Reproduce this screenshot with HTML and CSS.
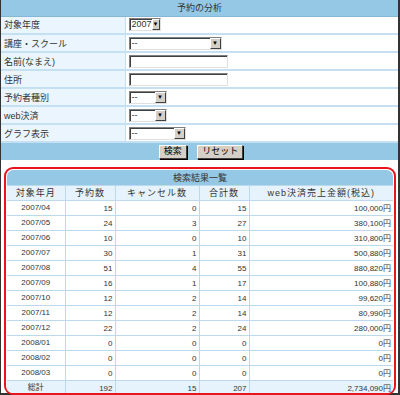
FILE: index.html
```html
<!DOCTYPE html>
<html lang="ja">
<head>
  <meta charset="UTF-8" />
  <title>予約の分析</title>
  <link rel="stylesheet" href="styles.css">
</head>
<body>
  <div class="frame">
    <table class="search-form">
      <tr><th colspan="2" class="title">予約の分析</th></tr>
      <tr>
        <td class="label">対象年度</td>
        <td><span class="sel w32"><span class="val">2007</span><span class="arrow">▼</span></span></td>
      </tr>
      <tr>
        <td class="label">講座・スクール</td>
        <td><span class="sel w93"><span class="val">--</span><span class="arrow">▼</span></span></td>
      </tr>
      <tr>
        <td class="label">名前(なまえ)</td>
        <td><span class="txt"></span></td>
      </tr>
      <tr>
        <td class="label">住所</td>
        <td><span class="txt"></span></td>
      </tr>
      <tr>
        <td class="label">予約者種別</td>
        <td><span class="sel w38"><span class="val">--</span><span class="arrow">▼</span></span></td>
      </tr>
      <tr>
        <td class="label">web決済</td>
        <td><span class="sel w38"><span class="val">--</span><span class="arrow">▼</span></span></td>
      </tr>
      <tr>
        <td class="label">グラフ表示</td>
        <td><span class="sel w57"><span class="val">--</span><span class="arrow">▼</span></span></td>
      </tr>
      <tr>
        <td colspan="2" class="buttons">
          <span class="btn">検索</span>
          <span class="btn">リセット</span>
        </td>
      </tr>
    </table>

    <div class="result-box">
      <table class="result">
        <tr><th colspan="5" class="title">検索結果一覧</th></tr>
        <tr class="head">
          <th class="c1">対象年月</th>
          <th class="c2">予約数</th>
          <th class="c3">キャンセル数</th>
          <th class="c4">合計数</th>
          <th class="c5">web決済売上金額(税込)</th>
        </tr>
        <tr><td class="month">2007/04</td><td>15</td><td>0</td><td>15</td><td>100,000円</td></tr>
        <tr><td class="month">2007/05</td><td>24</td><td>3</td><td>27</td><td>380,100円</td></tr>
        <tr><td class="month">2007/06</td><td>10</td><td>0</td><td>10</td><td>310,800円</td></tr>
        <tr><td class="month">2007/07</td><td>30</td><td>1</td><td>31</td><td>500,880円</td></tr>
        <tr><td class="month">2007/08</td><td>51</td><td>4</td><td>55</td><td>880,820円</td></tr>
        <tr><td class="month">2007/09</td><td>16</td><td>1</td><td>17</td><td>100,880円</td></tr>
        <tr><td class="month">2007/10</td><td>12</td><td>2</td><td>14</td><td>99,620円</td></tr>
        <tr><td class="month">2007/11</td><td>12</td><td>2</td><td>14</td><td>80,990円</td></tr>
        <tr><td class="month">2007/12</td><td>22</td><td>2</td><td>24</td><td>280,000円</td></tr>
        <tr><td class="month">2008/01</td><td>0</td><td>0</td><td>0</td><td>0円</td></tr>
        <tr><td class="month">2008/02</td><td>0</td><td>0</td><td>0</td><td>0円</td></tr>
        <tr><td class="month">2008/03</td><td>0</td><td>0</td><td>0</td><td>0円</td></tr>
        <tr class="total"><td class="month">総計</td><td>192</td><td>15</td><td>207</td><td>2,734,090円</td></tr>
      </table>
    </div>
  </div>
</body>
</html>
```

FILE: styles.css
```css
* {
  box-sizing: border-box;
}
body {
  margin: 0;
  background: #fff;
  font-family: "Liberation Sans", "Noto Sans CJK JP", sans-serif;
  font-size: 9px;
  color: #333;
}
.frame {
  width: 400px;
  height: 395px;
  border-left: 1px solid #333;
  border-right: 2px solid #333;
  border-bottom: 2px solid #333;
}
table {
  border-collapse: collapse;
  width: 100%;
}
.search-form .title {
  background: #95c8e5;
  border-bottom: 1px solid #86b8d6;
  height: 16px;
  font-weight: normal;
  padding: 0;
}
.search-form td {
  height: 18px;
  padding: 0 3px;
  border-bottom: 2px solid #c4e0f2;
  background: #fff;
}
.search-form td.label {
  width: 124px;
  background: #eaf5fd;
  border-right: 1px solid #c4e0f2;
}
.search-form td.buttons {
  background: #95c8e5;
  border-bottom: none;
  text-align: center;
  height: 18px;
  padding-left: 6px;
}
.sel {
  display: inline-flex;
  align-items: center;
  height: 13px;
  border: 1px solid;
  border-color: #808080 #e0e0e0 #e0e0e0 #808080;
  box-shadow: inset 1px 1px 0 #404040;
  background: #fff;
  vertical-align: middle;
}
.sel .val {
  flex: 1;
  padding-left: 2px;
  font-size: 9px;
  line-height: 11px;
}
.sel .arrow {
  width: 11px;
  height: 11px;
  background: #d4d0c8;
  border: 1px solid;
  border-color: #fff #404040 #404040 #fff;
  font-size: 6px;
  line-height: 9px;
  text-align: center;
  color: #000;
}
.w32 { width: 32px; }
.w38 { width: 38px; }
.w57 { width: 57px; }
.w93 { width: 93px; }
.txt {
  display: inline-block;
  width: 99px;
  height: 13px;
  border: 1px solid;
  border-color: #808080 #e0e0e0 #e0e0e0 #808080;
  box-shadow: inset 1px 1px 0 #404040;
  background: #fff;
  vertical-align: middle;
}
.btn {
  display: inline-block;
  height: 14px;
  padding: 0 4px;
  line-height: 11px;
  background: #d4d0c8;
  border: 1px solid;
  border-color: #fff #404040 #404040 #fff;
  box-shadow: 1px 1px 0 #000;
  color: #000;
  margin: 0 4px;
  vertical-align: middle;
}
.result-box {
  margin: 7px 2px 0 3px;
  height: 228px;
  border: 2px solid #e8141e;
  border-radius: 9px;
  padding: 1px 1px 0 1px;
  overflow: hidden;
}
.result {
  border-radius: 6px 6px 0 0;
  overflow: hidden;
}
.result .title {
  background: #95c8e5;
  height: 15px;
  font-weight: normal;
  padding: 0;
  border-radius: 6px 6px 0 0;
}
.result .head th {
  background: #e6f3fc;
  font-weight: normal;
  height: 15px;
  padding: 0;
  border: 1px solid #bcdaee;
  letter-spacing: 1px;
}
.result .head th:first-child { border-left: none; }
.result .head th:last-child { border-right: none; }
.result td {
  height: 15px;
  padding: 2px 2px 0 0;
  text-align: right;
  border: 1px solid #bcdaee;
  font-size: 8px;
  line-height: 12px;
}
.result td:first-child { border-left: none; }
.result td:last-child { border-right: none; }
.result td.month {
  text-align: center;
  padding: 0;
}
.result .total td {
  background: #e6f3fc;
  border-bottom: none;
}
.c1 { width: 58px; }
.c2 { width: 50px; }
.c3 { width: 84px; }
.c4 { width: 50px; }
```
